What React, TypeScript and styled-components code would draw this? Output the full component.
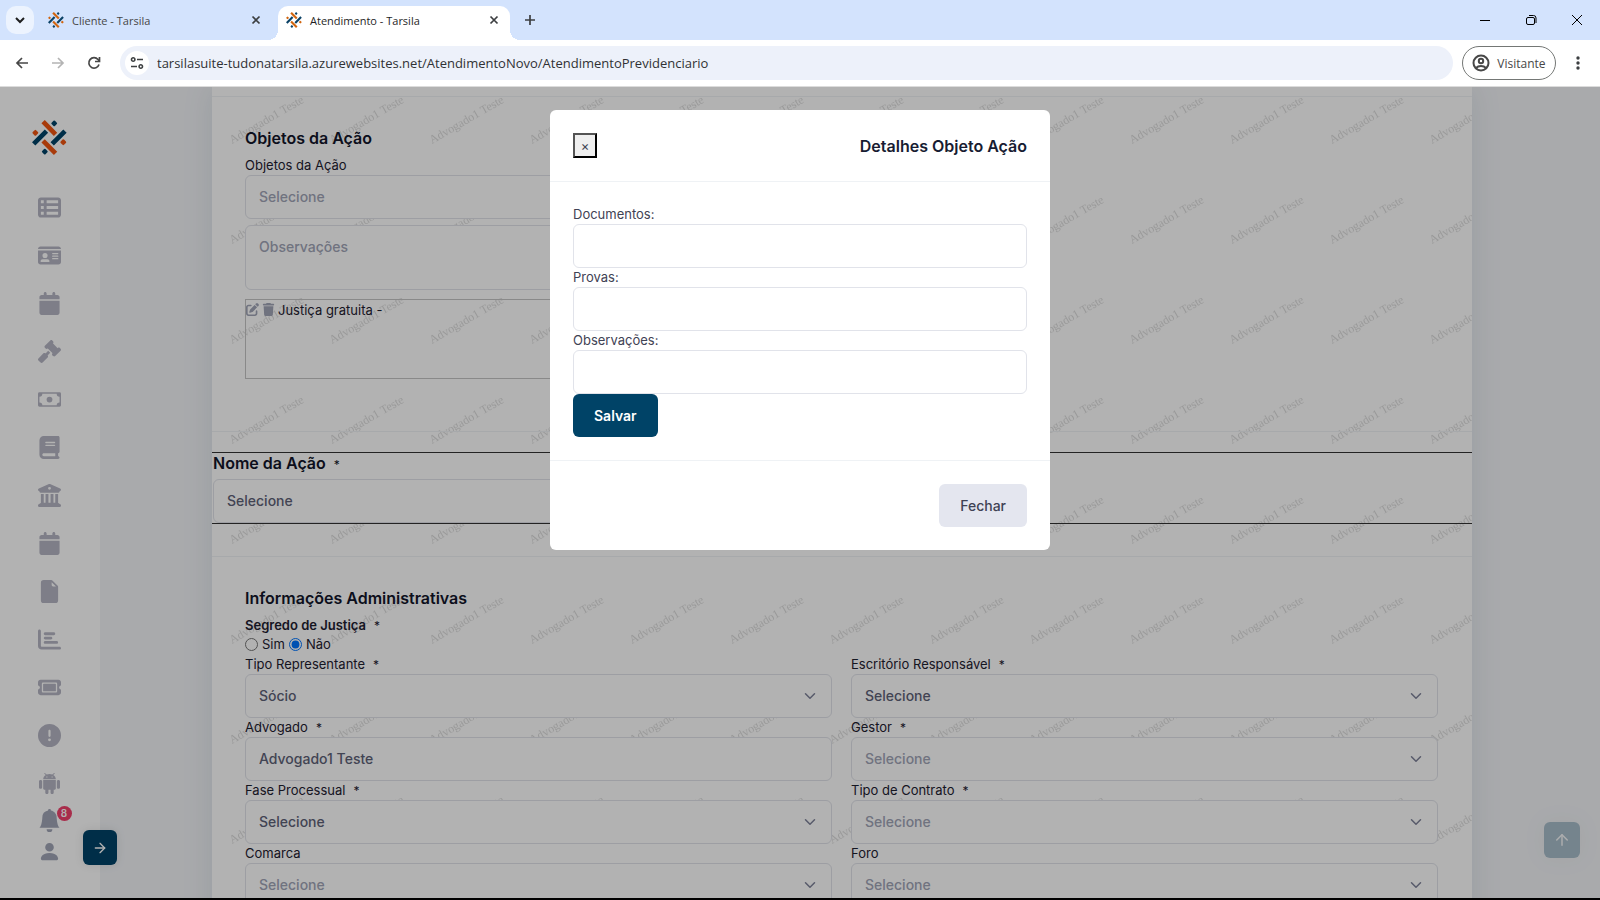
import React from 'react';
import styled, { createGlobalStyle, css } from 'styled-components';
import {
  FaTableList, FaIdCard, FaCalendar, FaGavel, FaBook, FaBuildingColumns,
  FaChartBar, FaTicket, FaCircleExclamation, FaTrash, FaPenToSquare,
} from 'react-icons/fa6';
import { BsCash, BsFileEarmarkFill, BsBellFill, BsPersonFill } from 'react-icons/bs';
import { ChevronDown, ArrowRight, ArrowUp } from 'lucide-react';

const color = {
  primary: '#004367',
  heading: '#12152a',
  label: '#1e2030',
  text: '#3f4254',
  field: '#5e6278',
  muted: '#a1a5b7',
  icon: '#b5b5c3',
  border: '#e1e3ea',
  line: '#eff2f5',
};

const GlobalStyle = createGlobalStyle`
  *, *::before, *::after { box-sizing: border-box; }
  body { margin: 0; font-family: Inter, "Liberation Sans", sans-serif; font-size: 13px; color: ${color.text}; }
  button, input, select, textarea { font: inherit; color: inherit; margin: 0; }
`;

const Shell = styled.div`
  display: flex;
  flex-direction: column;
  height: 100vh;
  overflow: hidden;
  border-bottom: 2px solid #000;
`;

/* ---------- browser chrome ---------- */

const chromeFont = css`
  font-family: "Open Sans", "Noto Sans", sans-serif;
`;

const TabStrip = styled.header`
  ${chromeFont}
  flex: none;
  display: flex;
  height: 40px;
  padding: 6px 0 0 6px;
  background: #d3e3fd;
  font-size: 11px;
`;

const PlainButton = styled.button`
  display: inline-flex;
  align-items: center;
  justify-content: center;
  padding: 0;
  border: 0;
  background: none;
  color: #3c3f41;
`;

const TabSearch = styled(PlainButton)`
  width: 28px;
  height: 28px;
  border-radius: 10px;
  background: #ecf3fe;
  color: #1f1f1f;
`;

const Tab = styled.div<{ $active?: boolean }>`
  position: relative;
  display: flex;
  align-items: center;
  gap: 8px;
  width: ${p => (p.$active ? 232 : 244)}px;
  height: 34px;
  padding: 0 ${p => (p.$active ? 8 : 14)}px 6px;
  border-radius: 10px 10px 0 0;
  background: ${p => (p.$active ? '#fff' : 'transparent')};
  color: ${p => (p.$active ? '#1f1f1f' : '#474747')};
  ${p => p.$active && css`
    &::before, &::after {
      content: '';
      position: absolute;
      bottom: 0;
      width: 10px;
      height: 10px;
    }
    &::before { left: -10px; background: radial-gradient(circle at 0 0, transparent 10px, #fff 10px); }
    &::after { right: -10px; background: radial-gradient(circle at 100% 0, transparent 10px, #fff 10px); }
  `}
`;

const TabTitle = styled.span`
  flex: 1;
  white-space: nowrap;
`;

const TabClose = styled(PlainButton)`
  width: 16px;
  height: 16px;
`;

const NewTab = styled(PlainButton)`
  width: 28px;
  height: 28px;
  margin-left: 6px;
`;

const WindowControls = styled.div`
  display: flex;
  margin-left: auto;
  height: 28px;
`;

const WindowButton = styled(PlainButton)`
  width: 46px;
  color: #000;
`;

const Toolbar = styled.div`
  ${chromeFont}
  flex: none;
  display: flex;
  align-items: center;
  height: 47px;
  padding: 0 8px 0 4px;
  border-bottom: 1px solid #dcdcdc;
  background: #fff;
`;

const NavButton = styled(PlainButton)<{ $dim?: boolean }>`
  width: 36px;
  height: 34px;
  color: ${p => (p.$dim ? '#b4b4b4' : '#474747')};
`;

const AddressBar = styled.label`
  flex: 1;
  display: flex;
  align-items: center;
  gap: 8px;
  height: 34px;
  margin: 0 9px 0 8px;
  padding: 0 5px;
  border-radius: 17px;
  background: #edf1fa;
`;

const SiteInfo = styled(PlainButton)`
  width: 24px;
  height: 24px;
  border-radius: 12px;
  background: #fff;
`;

const Url = styled.input`
  flex: 1;
  padding: 0;
  border: 0;
  outline: 0;
  background: none;
  color: #303134;
  font-size: 13px;
`;

const Profile = styled(PlainButton)`
  gap: 7px;
  width: 94px;
  height: 34px;
  border: 1px solid #747775;
  border-radius: 17px;
  color: #474747;
  font-size: 12px;
`;

const MenuButton = styled(PlainButton)`
  width: 28px;
  height: 34px;
  margin-left: 8px;
`;

/* ---------- page ---------- */

const Page = styled.div`
  position: relative;
  flex: 1;
  min-height: 0;
  display: flex;
  overflow: hidden;
  background: #f2f4f7;
`;

const Sidebar = styled.aside`
  position: relative;
  z-index: 1;
  flex: none;
  display: flex;
  flex-direction: column;
  align-items: center;
  width: 100px;
  padding: 33px 2px 0 0;
  background: #fff;
`;

const Nav = styled.nav`
  display: flex;
  flex-direction: column;
  margin-top: 28px;
`;

const NavItem = styled.a`
  display: flex;
  align-items: center;
  justify-content: center;
  width: 52px;
  height: 48px;
  color: ${color.icon};
  font-size: 23px;
`;

const UserLinks = styled.div`
  display: flex;
  flex-direction: column;
  align-items: center;
  gap: 8px;
  margin-top: 2px;
`;

const UserLink = styled.a`
  position: relative;
  display: flex;
  color: ${color.muted};
  font-size: 23px;
`;

const Badge = styled.span`
  position: absolute;
  top: -3px;
  right: -11px;
  width: 15px;
  height: 15px;
  border-radius: 8px;
  background: #f1416c;
  color: #fff;
  font-size: 10px;
  font-weight: 600;
  line-height: 15px;
  text-align: center;
`;

const SidebarToggle = styled.button`
  position: absolute;
  right: -17px;
  bottom: 33px;
  display: flex;
  align-items: center;
  justify-content: center;
  width: 34px;
  height: 35px;
  padding: 0;
  border: 0;
  border-radius: 6px;
  background: ${color.primary};
  color: #fff;
  box-shadow: 0 0 10px rgba(0, 0, 0, 0.1);
`;

const Content = styled.main`
  flex: 1;
  min-width: 0;
  padding: 0 128px 0 112px;
`;

const Card = styled.div`
  position: relative;
  padding-top: 9px;
  background: #fff;
  box-shadow: 0 0 30px rgba(0, 50, 90, 0.1);
`;

const WatermarkLayer = styled.svg`
  position: absolute;
  inset: 0;
  width: 100%;
  height: 100%;
  font-family: "Liberation Serif", serif;
  font-size: 12px;
`;

const Section = styled.section`
  position: relative;
  padding: 31px 34px 52px 33px;
  border-top: 1px solid ${color.line};
`;

const Divider = styled.hr`
  position: relative;
  margin: 0;
  border: 0;
  border-top: 1px solid ${color.line};
`;

const Heading = styled.h2`
  margin: 0 0 8px;
  color: ${color.heading};
  font-size: 16px;
  font-weight: 600;
  line-height: 20px;
`;

const HalfColumn = styled.div`
  display: flex;
  flex-direction: column;
  width: calc(50% - 10px);
`;

const Label = styled.label<{ $bold?: boolean }>`
  display: block;
  color: ${color.label};
  font-size: 13px;
  font-weight: ${p => (p.$bold ? 600 : 400)};
  line-height: 19px;
`;

const RequiredMark = styled.span`
  margin-left: 8px;
  font-size: 12px;
  font-weight: 400;
  line-height: 1;
`;

const ModalLabel = styled(Label)`
  color: ${color.text};
`;

const fieldStyle = css`
  display: block;
  width: 100%;
  height: 44px;
  padding: 0 13px 2px;
  border: 1px solid ${color.border};
  border-radius: 6px;
  outline: 0;
  background: #fff;
  color: ${color.field};
  font-size: 14px;
  font-weight: 500;
`;

const TextField = styled.input`
  ${fieldStyle}
`;

const TextArea = styled.textarea`
  ${fieldStyle}
  height: 65px;
  margin: 6px 0 9px;
  padding: 11px 13px;
  line-height: 20px;
  resize: none;
  &::placeholder { color: ${color.muted}; }
`;

const SelectBox = styled.div`
  position: relative;
`;

const NativeSelect = styled.select<{ $muted?: boolean }>`
  ${fieldStyle}
  appearance: none;
  color: ${p => (p.$muted ? color.muted : color.field)};
`;

const SelectArrow = styled(ChevronDown)`
  position: absolute;
  top: 13px;
  right: 13px;
  color: #7e8299;
  pointer-events: none;
`;

const ItemList = styled.ul`
  display: block;
  height: 80px;
  margin: 0;
  padding: 0;
  border: 1px solid #c4c4c4;
  list-style: none;
`;

const Item = styled.li`
  display: flex;
  align-items: center;
  gap: 3px;
  height: 19px;
  color: ${color.label};
`;

const ItemAction = styled(PlainButton)`
  color: ${color.muted};
  font-size: 13px;
`;

const ActionName = styled.section`
  position: relative;
  margin: 20px 0 32px;
  padding-left: 1px;
  border: 1px solid #333;
  border-width: 1px 0;
`;

const ActionHeading = styled(Heading)`
  display: block;
  margin-bottom: 6px;
`;

const RadioRow = styled.div`
  display: flex;
  align-items: center;
  gap: 4px;
  height: 20px;
  padding-bottom: 2px;
  color: ${color.label};
`;

const Radio = styled.input`
  width: 13px;
  height: 13px;
`;

const FormGrid = styled.div`
  display: grid;
  grid-template-columns: 1fr 1fr;
  column-gap: 19px;
`;

const ScrollTop = styled.button`
  position: absolute;
  right: 20px;
  bottom: 40px;
  display: flex;
  align-items: center;
  justify-content: center;
  width: 36px;
  height: 36px;
  padding: 0;
  border: 0;
  border-radius: 6px;
  background: ${color.primary};
  color: #fff;
  opacity: 0.3;
  box-shadow: 0 0 20px rgba(0, 0, 0, 0.1);
`;

/* ---------- modal ---------- */

const Backdrop = styled.div`
  position: absolute;
  z-index: 2;
  inset: 0;
  display: flex;
  align-items: flex-start;
  justify-content: center;
  padding-top: 23px;
  background: rgba(0, 0, 0, 0.3);
`;

const Dialog = styled.div`
  width: 500px;
  max-width: 100%;
  border-radius: 6px;
  background: #fff;
`;

const DialogHeader = styled.div`
  display: flex;
  align-items: center;
  justify-content: space-between;
  padding: 23px;
  border-bottom: 1px solid ${color.line};
`;

const DialogTitle = styled(Heading)`
  margin: 0;
  color: #181c32;
`;

const DialogClose = styled.button`
  width: 24px;
  height: 25px;
  padding: 0;
  border: 2px outset #000;
  background: #efefef;
  line-height: 20px;
`;

const DialogBody = styled.form`
  padding: 23px;
`;

const DialogFooter = styled.div`
  display: flex;
  justify-content: flex-end;
  padding: 23px;
  border-top: 1px solid ${color.line};
`;

const ActionButton = styled.button<{ $primary?: boolean }>`
  display: block;
  height: 43px;
  padding: 0 21px;
  border: 0;
  border-radius: 6px;
  background: ${p => (p.$primary ? color.primary : '#e4e6ef')};
  color: ${p => (p.$primary ? '#fff' : color.text)};
  font-size: 14px;
  font-weight: ${p => (p.$primary ? 600 : 500)};
`;

/* ---------- drawings ---------- */

function Logo({ size, orange, blue }: { size: number; orange: string; blue: string }) {
  const dot = (x: number, y: number, fill: string) => (
    <rect x={x - 7} y={y - 7} width="14" height="14" rx="3" fill={fill} transform={`rotate(45 ${x} ${y})`} />
  );
  return (
    <svg width={size} height={size} viewBox="0 0 104 104" aria-hidden="true">
      <g strokeWidth="14">
        <path d="M33 5 70 43M33 62 70 99" stroke={orange} />
        <path d="M5 71 43 33M60 71 98 33" stroke={blue} />
      </g>
      {dot(66, 10, blue)}
      {dot(10, 38, orange)}
      {dot(93, 66, orange)}
      {dot(38, 94, blue)}
    </svg>
  );
}

const Favicon = () => <Logo size={16} orange="#d2650f" blue="#0b4266" />;

function Android() {
  return (
    <svg width="21" height="21" viewBox="2 0 20 24" preserveAspectRatio="none" fill="currentColor" aria-hidden="true">
      <path d="M6 18c0 .55.45 1 1 1h1v3.500c0 .83.67 1.500 1.500 1.500s1.500-.67 1.500-1.500V19h2v3.500c0 .83.67 1.500 1.500 1.500s1.500-.67 1.500-1.500V19h1c.55 0 1-.45 1-1V8H6v10zM3.500 8C2.670 8 2 8.670 2 9.500v7c0 .83.67 1.500 1.500 1.500S5 17.330 5 16.500v-7C5 8.670 4.330 8 3.500 8zm17 0c-.83 0-1.500.67-1.500 1.500v7c0 .83.67 1.500 1.500 1.500s1.500-.67 1.500-1.500v-7c0-.83-.67-1.500-1.500-1.500zm-4.970-5.840l1.300-1.300c.2-.2.2-.51 0-.71-.2-.2-.51-.2-.71 0l-1.480 1.480C13.850 1.230 12.950 1 12 1c-.96 0-1.860.23-2.660.63L7.850.15c-.2-.2-.51-.2-.71 0-.2.2-.2.51 0 .71l1.310 1.310C6.970 3.260 6 5.010 6 7h12c0-1.990-.97-3.750-2.470-4.840zM10 5H9V4h1v1zm5 0h-1V4h1v1z" />
    </svg>
  );
}

function Glyph({ d, size = 16, width = 2 }: { d: string; size?: number; width?: number }) {
  return (
    <svg width={size} height={size} viewBox="0 0 16 16" fill="none" stroke="currentColor" strokeWidth={width} aria-hidden="true">
      <path d={d} />
    </svg>
  );
}

function Watermark() {
  return (
    <WatermarkLayer aria-hidden="true">
      <defs>
        <pattern id="watermark" x="12" y="9" width="100" height="100" patternUnits="userSpaceOnUse">
          <text transform="translate(8 48) rotate(-30)" fill="#000" fillOpacity="0.14">Advogado1 Teste</text>
        </pattern>
      </defs>
      <rect width="100%" height="100%" fill="url(#watermark)" />
    </WatermarkLayer>
  );
}

/* ---------- parts ---------- */

function Select({ id, value = 'Selecione', muted }: { id: string; value?: string; muted?: boolean }) {
  return (
    <SelectBox>
      <NativeSelect id={id} $muted={muted}>
        <option>{value}</option>
      </NativeSelect>
      <SelectArrow size={18} strokeWidth={2} />
    </SelectBox>
  );
}

const navItems = [
  { label: 'Lista', Icon: FaTableList },
  { label: 'Clientes', Icon: FaIdCard },
  { label: 'Agenda', Icon: FaCalendar },
  { label: 'Processos', Icon: FaGavel },
  { label: 'Financeiro', Icon: BsCash },
  { label: 'Biblioteca', Icon: FaBook },
  { label: 'Tribunais', Icon: FaBuildingColumns },
  { label: 'Prazos', Icon: FaCalendar },
  { label: 'Documentos', Icon: BsFileEarmarkFill },
  { label: 'Relatórios', Icon: FaChartBar },
  { label: 'Chamados', Icon: FaTicket },
  { label: 'Avisos', Icon: FaCircleExclamation },
  { label: 'Aplicativo', Icon: Android },
];

type FormField = {
  id: string;
  label: string;
  value?: string;
  required?: boolean;
  muted?: boolean;
  input?: boolean;
};

const formFields: FormField[] = [
  { id: 'representante', label: 'Tipo Representante', value: 'Sócio', required: true },
  { id: 'escritorio', label: 'Escritório Responsável', required: true },
  { id: 'advogado', label: 'Advogado', value: 'Advogado1 Teste', required: true, input: true },
  { id: 'gestor', label: 'Gestor', required: true, muted: true },
  { id: 'fase', label: 'Fase Processual', required: true },
  { id: 'contrato', label: 'Tipo de Contrato', required: true, muted: true },
  { id: 'comarca', label: 'Comarca', muted: true },
  { id: 'foro', label: 'Foro', muted: true },
];

const closePath = 'M4 4l8 8M12 4l-8 8';

function BrowserChrome() {
  return (
    <>
      <TabStrip>
        <TabSearch aria-label="Pesquisar guias"><Glyph d="M4 6l4 4 4-4" /></TabSearch>
        <Tab>
          <Favicon />
          <TabTitle>Cliente - Tarsila</TabTitle>
          <TabClose aria-label="Fechar guia"><Glyph d={closePath} size={14} /></TabClose>
        </Tab>
        <Tab $active>
          <Favicon />
          <TabTitle>Atendimento - Tarsila</TabTitle>
          <TabClose aria-label="Fechar guia"><Glyph d={closePath} size={14} /></TabClose>
        </Tab>
        <NewTab aria-label="Nova guia"><Glyph d="M8 3v10M3 8h10" width={1.7} /></NewTab>
        <WindowControls>
          <WindowButton aria-label="Minimizar"><Glyph d="M3 8.500h10" width={1} /></WindowButton>
          <WindowButton aria-label="Restaurar">
            <Glyph d="M5 5.500h5a1.500 1.500 0 0 1 1.500 1.500v4a1.500 1.500 0 0 1-1.500 1.500h-5A1.500 1.500 0 0 1 3.500 11V7A1.500 1.500 0 0 1 5 5.500zM6 3.500h4.500a2.500 2.500 0 0 1 2.500 2.500v5" width={1} />
          </WindowButton>
          <WindowButton aria-label="Fechar janela"><Glyph d="M3 3l10 10M13 3L3 13" width={1} /></WindowButton>
        </WindowControls>
      </TabStrip>
      <Toolbar>
        <NavButton aria-label="Voltar"><Glyph d="M14 8H3M8 3L3 8l5 5" width={1.7} /></NavButton>
        <NavButton $dim aria-label="Avançar"><Glyph d="M2 8h11M8 3l5 5-5 5" width={1.7} /></NavButton>
        <NavButton aria-label="Recarregar"><Glyph d="M13 9.500A5.200 5.200 0 1 1 12 4.500L13.500 6M13.500 2v4.500H9" width={1.7} /></NavButton>
        <AddressBar>
          <SiteInfo aria-label="Informações do site">
            <Glyph d="M2.500 4.500a1.700 1.700 0 1 0 3.400 0a1.700 1.700 0 1 0-3.400 0M8 4.500h6M10.100 11.500a1.700 1.700 0 1 0 3.400 0a1.700 1.700 0 1 0-3.400 0M2 11.500h6" width={1.6} />
          </SiteInfo>
          <Url
            aria-label="Endereço"
            defaultValue="tarsilasuite-tudonatarsila.azurewebsites.net/AtendimentoNovo/AtendimentoPrevidenciario"
          />
        </AddressBar>
        <Profile>
          <svg width="18" height="18" viewBox="0 0 18 18" fill="none" stroke="currentColor" strokeWidth="2" aria-hidden="true">
            <circle cx="9" cy="9" r="7.500" />
            <circle cx="9" cy="7" r="2.200" />
            <path d="M4 14c2.500-2.600 7.500-2.600 10 0" />
          </svg>
          Visitante
        </Profile>
        <MenuButton aria-label="Menu">
          <svg width="4" height="16" viewBox="0 0 4 16" fill="currentColor" aria-hidden="true">
            <circle cx="2" cy="3" r="1.700" />
            <circle cx="2" cy="8" r="1.700" />
            <circle cx="2" cy="13" r="1.700" />
          </svg>
        </MenuButton>
      </Toolbar>
    </>
  );
}

export default function App() {
  return (
    <Shell>
      <GlobalStyle />
      <BrowserChrome />
      <Page>
        <Sidebar>
          <Logo size={35} orange="#f15511" blue={color.primary} />
          <Nav>
            {navItems.map(({ label, Icon }) => (
              <NavItem key={label} href="#" aria-label={label}><Icon /></NavItem>
            ))}
          </Nav>
          <UserLinks>
            <UserLink href="#" aria-label="Notificações"><BsBellFill /><Badge>8</Badge></UserLink>
            <UserLink href="#" aria-label="Perfil"><BsPersonFill /></UserLink>
          </UserLinks>
          <SidebarToggle aria-label="Expandir menu"><ArrowRight size={16} /></SidebarToggle>
        </Sidebar>
        <Content>
          <Card>
            <Watermark />
            <Section>
              <Heading>Objetos da Ação</Heading>
              <HalfColumn>
                <Label htmlFor="objetos">Objetos da Ação</Label>
                <Select id="objetos" muted />
                <TextArea aria-label="Observações" placeholder="Observações" />
                <ItemList>
                  <Item>
                    <ItemAction aria-label="Editar"><FaPenToSquare /></ItemAction>
                    <ItemAction aria-label="Excluir"><FaTrash /></ItemAction>
                    Justiça gratuita -
                  </Item>
                </ItemList>
              </HalfColumn>
            </Section>
            <Divider />
            <ActionName>
              <HalfColumn>
                <ActionHeading as="label" htmlFor="acao">
                  Nome da Ação<RequiredMark>*</RequiredMark>
                </ActionHeading>
                <Select id="acao" />
              </HalfColumn>
            </ActionName>
            <Section>
              <Heading>Informações Administrativas</Heading>
              <Label as="div" id="segredo" $bold>
                Segredo de Justiça<RequiredMark>*</RequiredMark>
              </Label>
              <RadioRow role="radiogroup" aria-labelledby="segredo">
                <Radio type="radio" name="segredo" id="sim" />
                <label htmlFor="sim">Sim</label>
                <Radio type="radio" name="segredo" id="nao" defaultChecked />
                <label htmlFor="nao">Não</label>
              </RadioRow>
              <FormGrid>
                {formFields.map(f => (
                  <div key={f.id}>
                    <Label htmlFor={f.id}>
                      {f.label}
                      {f.required && <RequiredMark>*</RequiredMark>}
                    </Label>
                    {f.input
                      ? <TextField id={f.id} defaultValue={f.value} />
                      : <Select id={f.id} value={f.value} muted={f.muted} />}
                  </div>
                ))}
              </FormGrid>
            </Section>
          </Card>
        </Content>
        <ScrollTop aria-label="Voltar ao topo"><ArrowUp size={18} /></ScrollTop>
        <Backdrop>
          <Dialog role="dialog" aria-modal="true" aria-labelledby="dialog-title">
            <DialogHeader>
              <DialogClose aria-label="Fechar">×</DialogClose>
              <DialogTitle id="dialog-title">Detalhes Objeto Ação</DialogTitle>
            </DialogHeader>
            <DialogBody>
              <ModalLabel htmlFor="documentos">Documentos:</ModalLabel>
              <TextField id="documentos" />
              <ModalLabel htmlFor="provas">Provas:</ModalLabel>
              <TextField id="provas" />
              <ModalLabel htmlFor="observacoes">Observações:</ModalLabel>
              <TextField id="observacoes" />
              <ActionButton $primary type="button">Salvar</ActionButton>
            </DialogBody>
            <DialogFooter>
              <ActionButton type="button">Fechar</ActionButton>
            </DialogFooter>
          </Dialog>
        </Backdrop>
      </Page>
    </Shell>
  );
}
